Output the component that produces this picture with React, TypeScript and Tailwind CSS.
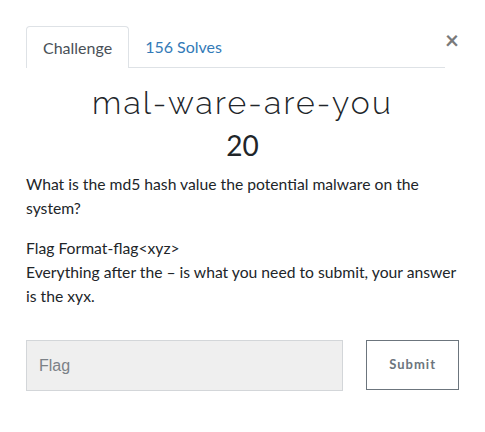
import React from "react";

export default function App() {
    return (
        <div className="w-[485px] h-[432px] bg-white px-[26px] pt-[26px] text-[#212529]" style={{ fontFamily: "Lato, 'Noto Sans', sans-serif" }}>
            <div className="flex items-start">
                <div className="flex flex-1 border-b border-[#dee2e6] text-[16px]">
                    <div className="h-[42px] px-[16px] flex items-center border border-b-0 border-[#dee2e6] rounded-t-[4px] bg-white text-[#495057] -mb-px">
                        Challenge
                    </div>
                    <div className="h-[41px] px-[16px] flex items-center text-[#337ab7]">
                        156 Solves
                    </div>
                </div>
                <button className="w-[14px] h-[26px] mt-[1px] flex items-center justify-center text-[#7a7a7a] text-[24px] font-bold leading-none">
                    ×
                </button>
            </div>

            <h2 className="mt-[16px] text-center text-[32px] font-light leading-[38px] tracking-[2.2px]" style={{ fontFamily: "Raleway, Lato, sans-serif" }}>
                mal-ware-are-you
            </h2>
            <h3 className="mt-[6px] text-center text-[28px] leading-[34px]">20</h3>

            <div className="mt-[10px] -mr-[2px] text-[15.7px] leading-[24px]">
                <p>What is the md5 hash value the potential malware on the system?</p>
                <p className="mt-[16px]">
                    Flag Format-flag&lt;xyz&gt;
                    <br />
                    Everything after the – is what you need to submit, your answer is the xyx.
                </p>
            </div>

            <div className="mt-[32px] flex items-start gap-[23px]">
                <input
                    className="w-[318px] h-[51px] bg-[#efefef] border border-[#d3d6d9] px-[12px] text-[16px] placeholder-[#7b8187] outline-none"
                    style={{ fontFamily: "'Liberation Sans', Arial, sans-serif" }}
                    placeholder="Flag"
                />
                <button className="w-[93px] h-[50px] border border-[#6c757d] text-[#6c757d] text-[13px] font-bold tracking-[1px]">
                    Submit
                </button>
            </div>
        </div>
    )
}
